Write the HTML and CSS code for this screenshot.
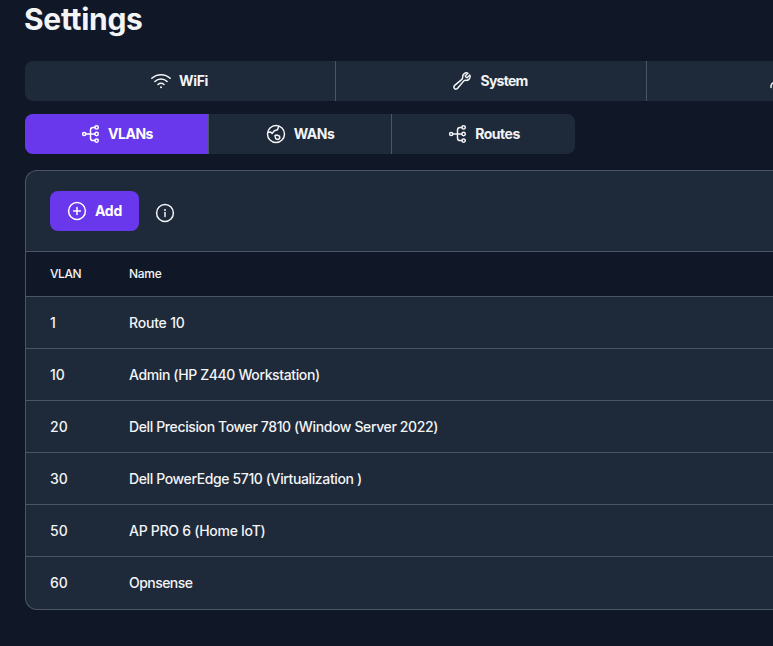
FILE: index.html
```html
<!DOCTYPE html>
<html lang="en">
<head>
<meta charset="utf-8">
<title>Settings</title>
<link rel="stylesheet" href="styles.css">
</head>
<body>
<svg width="0" height="0" class="defs">
  <symbol id="tree" viewBox="0 0 20 20"><circle cx="4.2" cy="10" r="1.6"/><circle cx="16.6" cy="3.4" r="1.7"/><circle cx="16.6" cy="10" r="1.7"/><circle cx="16.6" cy="16.6" r="1.7"/><path d="M5.8 10h9.1M14.9 3.4h-1.8q-2.6 0-2.6 2.6v8q0 2.6 2.6 2.6h1.8"/></symbol>
</svg>
<main class="page">
  <h1 class="title">Settings</h1>
  <nav class="tabs tabs-main">
    <a class="tab wifi"><svg class="icon" viewBox="0 0 20 20"><path d="M.8 7.3a13.4 13.4 0 0 1 18.4 0M3.9 10.5a8.8 8.8 0 0 1 12.2 0M7 13.5a4.4 4.4 0 0 1 6 0"/><circle class="dot" cx="10" cy="16.2" r="1"/></svg><span>WiFi</span></a>
    <a class="tab system"><svg class="icon wrench" viewBox="0 0 24 24"><path d="M21.75 6.75a4.5 4.5 0 0 1-4.884 4.484c-1.076-.091-2.264.071-2.95.904l-7.152 8.684a2.548 2.548 0 1 1-3.586-3.586l8.684-7.152c.833-.686.995-1.874.904-2.95a4.5 4.5 0 0 1 6.336-4.486l-3.276 3.276a3.004 3.004 0 0 0 2.25 2.25l3.276-3.276c.256.565.398 1.192.398 1.852Z"/></svg><span>System</span></a>
    <a class="tab clipped" aria-label="Users"><svg class="icon" viewBox="0 0 20 20"><path d="M1 16.6v-1.2a4 4 0 0 1 4-4"/></svg></a>
  </nav>
  <nav class="tabs tabs-sub">
    <a class="tab active"><svg class="icon"><use href="#tree"/></svg><span>VLANs</span></a>
    <a class="tab"><svg class="icon" viewBox="0 0 20 20"><circle cx="10" cy="10" r="8.5"/><path d="M1.9 8.3l2.8-.4 1.4 1.5 2.2-2.6 3.2-1 1.2-3.4M9 11.6l2.2-.5 2.4 1.1.1 2.1-1.8 1.3-2.2-.9z"/></svg><span>WANs</span></a>
    <a class="tab"><svg class="icon"><use href="#tree"/></svg><span>Routes</span></a>
  </nav>
  <section class="card">
    <div class="toolbar">
      <button class="add"><svg class="icon" viewBox="0 0 20 20"><circle cx="10" cy="10" r="8.4"/><path d="M10 6.6v6.8M6.6 10h6.8"/></svg><span>Add</span></button>
      <svg class="icon info" viewBox="0 0 20 20"><circle cx="10" cy="10" r="8.4"/><path d="M10 9.5v4"/><circle class="dot" cx="10" cy="6.9" r="1"/></svg>
    </div>
    <div class="row head"><span>VLAN</span><span>Name</span></div>
    <div class="row"><span>1</span><span class="light">Route 10</span></div>
    <div class="row"><span>10</span><span>Admin (HP Z440 Workstation)</span></div>
    <div class="row"><span>20</span><span>Dell Precision Tower 7810 (Window Server 2022)</span></div>
    <div class="row"><span>30</span><span>Dell PowerEdge 5710 (Virtualization )</span></div>
    <div class="row"><span>50</span><span class="medium">AP PRO 6 (Home IoT)</span></div>
    <div class="row"><span>60</span><span class="tight">Opnsense</span></div>
  </section>
</main>
</body>
</html>
```
FILE: styles.css
```css
* { box-sizing: border-box; }
html, body { margin: 0; height: 100%; overflow: hidden; }
body {
  background: #101828;
  color: #f3f4f6;
  font: 500 14px/20px Inter, "Liberation Sans", sans-serif;
}
.defs { display: block; height: 0; }
.page { padding-left: 25px; }
.title { margin: 0 0 22px -1px; font-size: 30px; line-height: 39px; font-weight: 700; letter-spacing: -0.3px; }
.tabs { display: grid; height: 40px; background: #1e2939; overflow: hidden; }
.tabs-main { grid-template-columns: 311px 311px 1fr; margin-bottom: 13px; border-radius: 8px 0 0 8px; }
.tabs-sub { grid-template-columns: 184px 183px 183px; width: 550px; margin-bottom: 16px; border-radius: 8px; }
.tab {
  display: flex;
  align-items: center;
  justify-content: center;
  gap: 8px;
  border-right: 1px solid #4a5565;
  font-weight: 700;
  letter-spacing: -0.5px;
  overflow: hidden;
}
.tab.wifi { padding-right: 1px; letter-spacing: -0.3px; }
.tab.system { padding-right: 2px; letter-spacing: -0.75px; }
.tab:last-child { border-right: 0; }
.tab.clipped { justify-content: flex-start; padding-left: 123px; }
.active { background: #6a38ec; color: #fff; }
.icon { width: 20px; height: 20px; flex: none; fill: none; stroke: currentColor; stroke-width: 1.5; stroke-linecap: round; stroke-linejoin: round; }
.wrench { stroke-width: 1.8; }
.dot { fill: currentColor; stroke: none; }
.card {
  height: 440px;
  border: 1px solid #4a5565;
  border-right: 0;
  border-radius: 12px 0 0 12px;
  background: #1e2939;
  overflow: hidden;
}
.toolbar { height: 81px; display: flex; align-items: center; gap: 16px; padding-left: 24px; border-bottom: 1px solid #4a5565; }
.add {
  display: flex;
  align-items: center;
  justify-content: center;
  gap: 8px;
  width: 89px;
  height: 40px;
  padding: 0;
  border: 0;
  border-radius: 8px;
  background: #6a38ec;
  color: #fff;
  font: inherit;
  font-weight: 700;
  letter-spacing: -0.2px;
}
.info { margin-top: 4px; }
.row { display: grid; grid-template-columns: 79px 1fr; align-items: center; height: 52px; padding-left: 24px; border-bottom: 1px solid #4a5565; }
.row:last-child { border-bottom: 0; }
.row > span { justify-self: start; white-space: pre; }
.row > span + span { letter-spacing: -0.38px; }
.row > span + .light { letter-spacing: -0.2px; }
.row > span + .medium { letter-spacing: -0.28px; }
.row > span + .tight { letter-spacing: -0.55px; }
.head { height: 45px; background: #101828; font-size: 12px; }
.head > span { letter-spacing: -0.4px; }
.head > span + span { letter-spacing: -0.3px; }
```
